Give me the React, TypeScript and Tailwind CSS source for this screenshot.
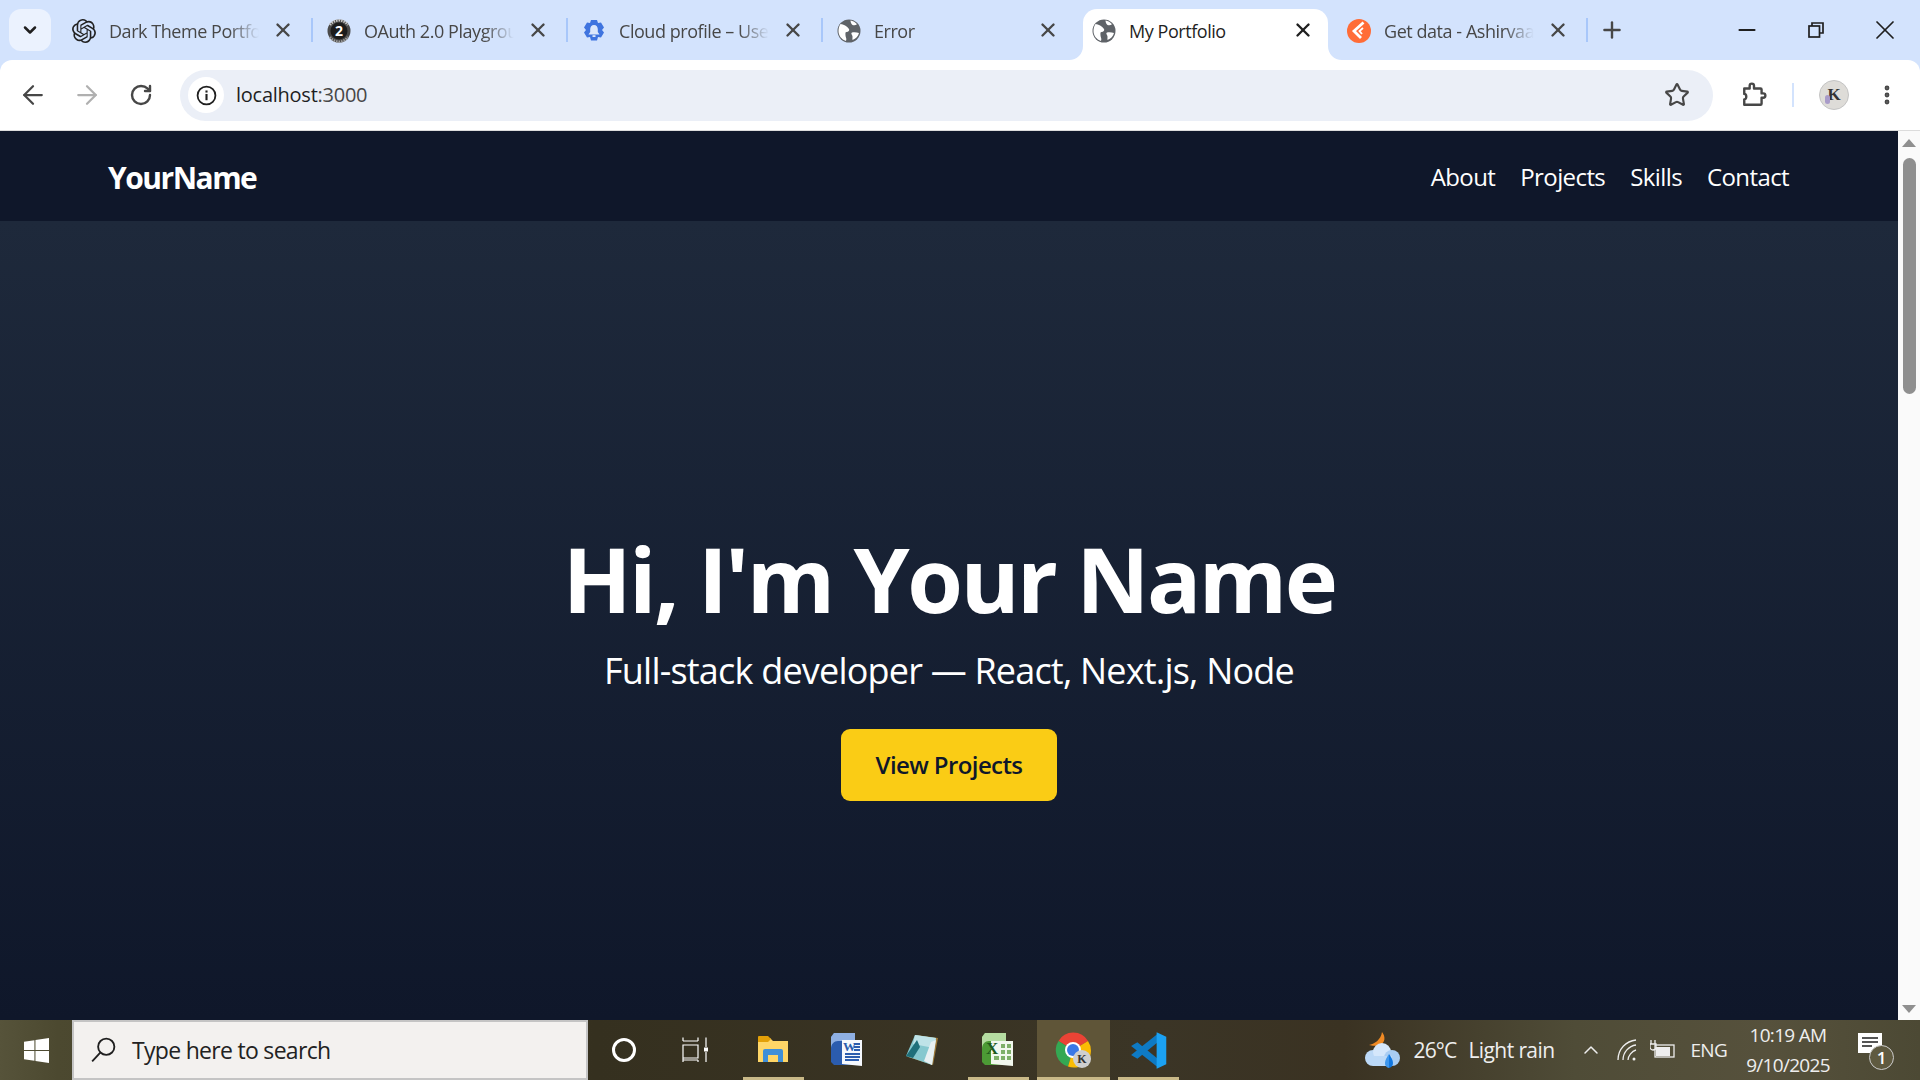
import { X, Plus, ArrowLeft, ArrowRight, RotateCw, Star, Minus, ChevronDown, EllipsisVertical, ChevronUp } from "lucide-react";
import { SiOpenai } from "react-icons/si";

const ui = "font-['Open_Sans','Noto_Sans',sans-serif]";

function Globe() {
  return (
    <svg viewBox="0 0 24 24" className="w-[24px] h-[24px]">
      <circle cx="12" cy="12" r="11.500" fill="#5f6368" />
      <path d="M3.500 5c3 .5 6.500 2 8.500 5 .8 1.500-.5 3-2.500 3-1.500 0-1 2-1 3.500 0 1.500 1.500 3 .5 5.500C4.500 20.500 1.500 16.500 1.500 12c0-2.500.7-5 2-7z" fill="#fff" />
      <path d="M13.500 1.500c2.500.3 5 1.800 6.500 3.800-1.500 1.200-3 1.200-4.500.7-1-.5-2-2.700-2-4.500zM15 13.500c2-.5 5-.3 7 .5-.8 3-3 5.800-6.500 7-.3-2 .5-3.500-.5-5-.7-1-1-2 0-2.500z" fill="#fff" />
    </svg>
  );
}

function OAuthIcon() {
  return (
    <svg viewBox="0 0 24 24" className="w-[24px] h-[24px]">
      <circle cx="12" cy="12" r="11.500" fill="#4a4a4a" />
      <circle cx="12" cy="12" r="8.500" fill="#1c1c1c" />
      <path d="M3 6a11 11 0 0 1 18 0" stroke="#c8c8c8" strokeWidth="2.500" fill="none" strokeDasharray="1.500 1" />
      <path d="M3 18a11 11 0 0 0 18 0" stroke="#a0a0a0" strokeWidth="2.500" fill="none" strokeDasharray="1.500 1" />
      <text x="12" y="17" textAnchor="middle" fontSize="14" fontWeight="700" fill="#fff" fontFamily="Open Sans, sans-serif">2</text>
    </svg>
  );
}

function CloudIcon() {
  return (
    <svg viewBox="0 0 24 24" className="w-[24px] h-[24px]">
      <path d="M9 1h6l1 3 3-.5 3 5-2 2.500 2 2.500-3 5-3-.5-1 3.500H9l-1-3.500-3 .5-3-5 2-2.500-2-2.500 3-5 3 .5z" fill="#3f74df" />
      <path d="M12 6c-2.500 0-3.800 2-3.800 4.300v2.700l-1.700 2.500h11L15.800 13v-2.700C15.800 8 14.500 6 12 6z" fill="#dbe7fb" />
      <rect x="10.500" y="16.200" width="3" height="1.800" fill="#dbe7fb" />
    </svg>
  );
}

function GetDataIcon() {
  return (
    <svg viewBox="0 0 24 24" className="w-[24px] h-[24px]">
      <circle cx="12" cy="12" r="12" fill="#ff6c37" />
      <path d="M16.500 3.500 7 12l7 7" fill="none" stroke="#fff" strokeWidth="2.800" />
      <path d="M16 9l-3.500 3 2.500 3" fill="none" stroke="#fff" strokeWidth="1.800" />
    </svg>
  );
}

const tabs = [
  { title: "Dark Theme Portfolio", icon: <SiOpenai className="w-[24px] h-[24px] text-[#222]" /> },
  { title: "OAuth 2.0 Playground", icon: <OAuthIcon /> },
  { title: "Cloud profile – User", icon: <CloudIcon /> },
  { title: "Error", icon: <Globe /> },
  { title: "My Portfolio", icon: <Globe />, active: true },
  { title: "Get data - Ashirvaad", icon: <GetDataIcon /> },
];

function Tab({ title, icon, active, sep }: { title: string; icon: React.ReactNode; active?: boolean; sep?: boolean }) {
  return (
    <div className="relative w-[255px] h-[60px] shrink-0">
      {active && (
        <>
          <div className="absolute left-[6px] right-[4px] top-[9px] bottom-0 bg-white rounded-t-[14px]" />
          <svg viewBox="0 0 14 14" className="absolute left-[-8px] bottom-0 w-[14px] h-[14px]">
            <path d="M14 0v14H0c8 0 14-6 14-14z" fill="#fff" />
          </svg>
          <svg viewBox="0 0 14 14" className="absolute right-[-10px] bottom-0 w-[14px] h-[14px]">
            <path d="M0 0v14H14C6 14 0 8 0 0z" fill="#fff" />
          </svg>
        </>
      )}
      <div className="relative flex items-center h-[60px] pt-[2px] pl-[15px]">
        <div className="w-[24px] h-[24px] shrink-0">{icon}</div>
        <div
          className={`ml-[13px] w-[150px] whitespace-nowrap overflow-hidden text-[18px] tracking-[-0.45px] ${
            active ? "text-[#1f1f1f]" : "text-[#474747] [mask-image:linear-gradient(90deg,#000_80%,transparent)]"
          }`}
        >
          {title}
        </div>
        <X className={`absolute left-[215px] top-[19px] w-[22px] h-[22px] ${active ? "text-[#1f1f1f]" : "text-[#474747]"}`} strokeWidth={2.600} />
      </div>
      {sep && <div className="absolute right-[-1px] top-[18px] w-[2px] h-[24px] bg-[#a8c7fa]" />}
    </div>
  );
}

function TabStrip() {
  return (
    <div className="flex items-start h-[60px] shrink-0">
      <div className="w-[57px] shrink-0 pl-[9px] pt-[9px]">
        <div className="w-[42px] h-[42px] rounded-[12px] bg-[#ebf2fe] flex items-center justify-center">
          <ChevronDown className="w-[20px] h-[20px] text-[#1f1f1f]" strokeWidth={3} />
        </div>
      </div>
      {tabs.map((t, i) => (
        <Tab key={t.title} title={t.title} icon={t.icon} active={t.active} sep={i < 3 || i === 5} />
      ))}
      <div className="ml-[13px] mt-[18px] w-[24px] h-[24px] flex items-center justify-center">
        <Plus className="w-[26px] h-[26px] shrink-0 text-[#474747]" strokeWidth={2.200} />
      </div>
      <div className="ml-auto flex items-center h-[59px] pr-[1px]">
        <div className="w-[69px] flex justify-center">
          <Minus className="w-[26px] h-[26px] text-[#1f1f1f]" strokeWidth={1.800} />
        </div>
        <div className="w-[69px] flex justify-center">
          <svg viewBox="0 0 16 16" className="w-[16px] h-[16px]" fill="none" stroke="#1f1f1f" strokeWidth="1.700">
            <rect x="1" y="4" width="10.500" height="11" />
            <path d="M4 4V1h11v10h-3.500" />
          </svg>
        </div>
        <div className="w-[69px] flex justify-center">
          <X className="w-[32px] h-[32px] text-[#1f1f1f]" strokeWidth={1.300} />
        </div>
      </div>
    </div>
  );
}

function Toolbar() {
  return (
    <div className="flex items-center h-[71px] bg-white rounded-t-[12px] border-b border-[#dcdcdc] shrink-0">
      <div className="flex items-center w-[180px] shrink-0 pl-[11px]">
        <div className="w-[44px] flex justify-center">
          <ArrowLeft className="w-[30px] h-[30px] text-[#474747]" strokeWidth={1.800} />
        </div>
        <div className="w-[44px] ml-[10px] flex justify-center">
          <ArrowRight className="w-[30px] h-[30px] text-[#b0b0b0]" strokeWidth={1.800} />
        </div>
        <div className="w-[44px] ml-[10px] flex justify-center">
          <RotateCw className="w-[24px] h-[24px] text-[#474747]" strokeWidth={2.400} />
        </div>
      </div>
      <div className="flex items-center flex-1 h-[51px] rounded-full bg-[#ebeff7] pl-[8px] pr-[23px]">
        <div className="w-[36px] h-[36px] rounded-full bg-white flex items-center justify-center">
          <svg viewBox="0 0 20 20" className="w-[21px] h-[21px]" fill="none">
            <circle cx="10" cy="10" r="8.500" stroke="#1f1f1f" strokeWidth="1.700" />
            <rect x="9" y="8.500" width="2" height="6" fill="#1f1f1f" />
            <rect x="9" y="5.200" width="2" height="2" fill="#1f1f1f" />
          </svg>
        </div>
        <div className="ml-[12px] text-[20px] tracking-[-0.25px] text-[#1f1f1f]">
          localhost<span className="text-[#474747]">:3000</span>
        </div>
        <Star className="ml-auto w-[26px] h-[26px] text-[#474747]" strokeWidth={2} />
      </div>
      <div className="flex items-center flex-1 max-w-[207px] shrink-0 pl-[28px]">
        <svg viewBox="0 0 24 24" className="w-[26px] h-[26px]" fill="none" stroke="#474747" strokeWidth="2.200" strokeLinejoin="round">
          <path d="M3 6h5V3.500a2 2 0 0 1 4 0V6h6a1 1 0 0 1 1 1v3.500h1.500a2 2 0 0 1 0 4H19V20a1 1 0 0 1-1 1H3v-5c2.500 0 2.500-5 0-5z" />
        </svg>
        <div className="ml-[25px] w-[2px] h-[24px] bg-[#d3e3fd]" />
        <div className="relative ml-[25px] w-[30px] h-[30px] rounded-full bg-[#dedcd8] border border-[#c4c4c4] flex items-center justify-center font-['Liberation_Serif',serif] font-bold text-[17px] text-[#333]">
          K
          <div className="absolute left-[5px] top-[14px] w-[5px] h-[9px] rounded-full bg-[#a99bc9]" />
        </div>
        <EllipsisVertical className="ml-[26px] w-[24px] h-[24px] text-[#474747]" strokeWidth={2.800} />
      </div>
    </div>
  );
}

function Scrollbar() {
  return (
    <div className="w-[22px] shrink-0 bg-[#fafafa] flex flex-col items-center">
      <div className="mt-[8px] w-0 h-0 border-l-[7px] border-r-[7px] border-b-[8px] border-l-transparent border-r-transparent border-b-[#8f8f8f]" />
      <div className="mt-[11px] w-[13px] h-[236px] rounded-full bg-[#8f8f8f]" />
      <div className="mt-auto mb-[7px] w-0 h-0 border-l-[7px] border-r-[7px] border-t-[8px] border-l-transparent border-r-transparent border-t-[#8f8f8f]" />
    </div>
  );
}

function Page() {
  return (
    <div className="flex flex-1 min-h-0 overflow-hidden">
      <div className="flex-1 flex flex-col min-w-0">
        <header className="h-[90px] shrink-0 bg-[#0f172a] flex items-center justify-between pl-[108px] pr-[108px] pt-[2px]">
          <div className="text-[30px] font-bold text-white tracking-[-1.500px]">YourName</div>
          <nav className="flex gap-[25px] text-[24px] text-white tracking-[-0.6px] -translate-x-px">
            <span>About</span>
            <span>Projects</span>
            <span>Skills</span>
            <span>Contact</span>
          </nav>
        </header>
        <main className="flex-1 bg-gradient-to-b from-[#1e293b] to-[#0f172a] flex flex-col items-center justify-center pt-[93px]">
          <h1 className="text-[90px] leading-[90px] font-bold text-white tracking-[-2.500px]">Hi, I'm Your Name</h1>
          <p className="mt-[28px] text-[36px] leading-[40px] text-white tracking-[-0.800px]">Full-stack developer — React, Next.js, Node</p>
          <button className="mt-[38px] w-[216px] h-[72px] rounded-[9px] bg-[#facc15] text-[#0f172a] text-[24px] font-semibold tracking-[-0.6px]">
            View Projects
          </button>
        </main>
      </div>
      <Scrollbar />
    </div>
  );
}

function Slot({ on, bar, children }: { on?: boolean; bar?: boolean; children: React.ReactNode }) {
  return (
    <div className={`relative h-[60px] flex items-center justify-center ${on ? "w-[73px] mr-[2px] bg-[#5f5538]" : "w-[75px]"}`}>
      {children}
      {bar && <div className={`absolute bottom-0 h-[3px] bg-[#c9b988] ${on ? "left-0 right-0" : "left-[6px] right-[8px]"}`} />}
    </div>
  );
}

function Taskbar() {
  return (
    <div className="h-[60px] shrink-0 flex items-center text-white bg-[linear-gradient(90deg,#56533a_0%,#4c4930_3%,#35301f_31%,#3b3526_60%,#3a3222_70%,#4f4c37_82%,#56513c_92%,#4c4934_100%)]">
      <div className="w-[72px] shrink-0 flex justify-center">
        <svg viewBox="0 0 24 24" className="w-[25px] h-[25px]" fill="#fff">
          <path d="M0 3.500l10-1.400v9.400H0zM11 2l13-2v11.500H11zM0 12.500h10v9.400L0 20.500zM11 12.500h13V24l-13-2z" />
        </svg>
      </div>
      <div className="w-[516px] h-[60px] shrink-0 bg-[#f3f1ef] border-2 border-[#c4c4c4] flex items-center pl-[16px]">
        <svg viewBox="0 0 24 24" className="w-[26px] h-[26px]" fill="none" stroke="#1f1f1f" strokeWidth="1.700">
          <circle cx="15" cy="9" r="7.500" />
          <path d="M9.500 14.500 2 22.500" />
        </svg>
        <span className="ml-[16px] pt-[1px] text-[23px] tracking-[-0.7px] text-[#222]">Type here to search</span>
      </div>
      <div className="w-[72px] shrink-0 flex justify-center">
        <div className="w-[24px] h-[24px] rounded-full border-[3px] border-white" />
      </div>
      <div className="w-[72px] shrink-0 flex justify-center -ml-[1px]">
        <svg viewBox="0 0 26 26" className="w-[26px] h-[26px]" fill="none" stroke="#fff" strokeWidth="1.200">
          <path d="M1 4h15M16 .5V4M1 .5V4M1 8h15v13H1zM1 25v-3.500M1 23h15M16 25v-2M24 .5V10M24 15v10" />
          <rect x="22" y="10.500" width="4" height="4" fill="#fff" stroke="none" />
        </svg>
      </div>
      <div className="flex items-center ml-[6px]">
        <Slot bar>
          <svg viewBox="0 0 32 32" className="w-[32px] h-[32px] mr-[3px]">
            <path d="M1 4h12l3 3h15v21H1z" fill="#ffd667" />
            <path d="M1 3a1 1 0 0 1 1-1h9l3 3-3 3H1z" fill="#e3a008" />
            <path d="M6 28V17a2 2 0 0 1 2-2h16a2 2 0 0 1 2 2v11h-5v-7H11v7z" fill="#3f8fd8" />
          </svg>
        </Slot>
        <Slot>
          <svg viewBox="0 0 36 36" className="w-[36px] h-[36px] mr-[7px]">
            <path d="M3 5 L6 1h21v32H6l-3-3z" fill="#2b5cae" />
            <path d="M3 5L6 1h21v8H10c-4 0-7 3-7 8z" fill="#8fb0e3" />
            <path d="M14 8h20v26l-20-2z" fill="#f5f8fd" />
            <text x="15" y="19" fontSize="13" fontWeight="700" fill="#2b5cae" fontFamily="Liberation Serif, serif">W</text>
            <path d="M26 12h6M26 15h6M26 18h6M17 22h15M17 25h15M17 28h14" stroke="#2b5cae" strokeWidth="1.800" />
          </svg>
        </Slot>
        <Slot>
          <svg viewBox="0 0 34 36" className="w-[34px] h-[36px] mr-[5px]">
            <path d="M11 3 L33 6 L28 33 L3 25z" fill="#a07a3a" />
            <path d="M10 3 L31 6 L27 33 L1 24z" fill="#86c8cf" />
            <path d="M10 3 L31 6 L29 16 L8 12z" fill="#bfe3e8" />
            <path d="M19 29 L27 33 L31 8 L26 10z" fill="#e8f0f2" />
            <path d="M1 24 L12 8 L15 15 L8 26z" fill="#1f6f7a" />
          </svg>
        </Slot>
        <Slot bar>
          <svg viewBox="0 0 36 36" className="w-[36px] h-[36px] mr-[5px]">
            <path d="M3 5 L6 1h21v32H6l-3-3z" fill="#4c9a35" />
            <path d="M3 5L6 1h21v8H10c-4 0-7 3-7 8z" fill="#b5dca1" />
            <path d="M12 9h22v25l-22-2z" fill="#f2f8ee" />
            <path d="M22 12h4v4h-4zM28 12h4v4h-4zM22 18h4v4h-4zM28 18h4v4h-4zM15 24h5v4h-5zM22 24h4v4h-4zM28 24h4v4h-4z" fill="#7fb069" />
            <text x="7" y="22" fontSize="17" fontWeight="700" fill="#1e5a1b" fontFamily="Liberation Serif, serif">X</text>
          </svg>
        </Slot>
        <Slot on bar>
          <svg viewBox="0 0 36 36" className="w-[36px] h-[36px] mr-[2px]">
            <path d="M18 18 L3.500 9A17 17 0 0 1 33 9z" fill="#ea4335" />
            <path d="M18 18 L3.500 9A17 17 0 0 0 13 34.500z" fill="#34a853" />
            <path d="M18 18 L33 9A17 17 0 0 1 13 34.500z" fill="#fbbc04" />
            <circle cx="18" cy="18" r="8" fill="#fff" />
            <circle cx="18" cy="18" r="6" fill="#3b78e7" />
            <circle cx="27" cy="27" r="9" fill="#cfcfcf" />
            <text x="27" y="31" textAnchor="middle" fontSize="12" fontWeight="700" fill="#333" fontFamily="Liberation Serif, serif">K</text>
          </svg>
        </Slot>
        <Slot bar>
          <svg viewBox="0 0 100 100" className="w-[37px] h-[37px] mr-[2px]">
            <path d="M75 5 V28 L20 72 L3 62 Z" fill="#0e7ac4" />
            <path d="M3 38 L20 28 L75 72 V95 Z" fill="#0e7ac4" />
            <path d="M72 1 L98 13 V87 L72 99 Z" fill="#1ba1f2" />
          </svg>
        </Slot>
      </div>
      <div className="ml-auto flex items-center h-full">
        <svg viewBox="0 0 38 38" className="w-[38px] h-[38px]">
          <path d="M19 1c4 5 3 11-2 13-3 1-8 1-11 0 5-1 12-5 13-13z" fill="#f08a24" />
          <circle cx="10" cy="27" r="8" fill="#bcd9f7" />
          <circle cx="19" cy="21" r="9" fill="#d5e7fb" />
          <circle cx="29" cy="27" r="8" fill="#a9cdf3" />
          <rect x="10" y="25" width="19" height="10" fill="#bcd9f7" />
          <path d="M26 23v14a5 5 0 0 0 4-5c0-3-2-6-4-9z" fill="#1177e0" />
          <path d="M26 23c-2 3-4 6-4 9a4.500 4.500 0 0 0 4 5z" fill="#3f97ec" />
        </svg>
        <span className="ml-[12px] pt-[1px] text-[21px] tracking-[-0.8px] text-[#eee]">26°C</span>
        <span className="ml-[12px] pt-[1px] text-[21px] tracking-[-0.6px] text-[#eee]">Light rain</span>
        <ChevronUp className="ml-[25px] w-[24px] h-[24px] text-[#eee]" strokeWidth={1.500} />
        <svg viewBox="0 0 24 24" className="ml-[13px] w-[24px] h-[24px]" fill="none" stroke="#eee" strokeWidth="1.300">
          <path d="M2 22C2 11 10 3 20 2M7 22C7 14 13 8 20 7M12 22c0-4 4-9 8-10" />
          <circle cx="18" cy="21" r="1.500" fill="#eee" stroke="none" />
        </svg>
        <svg viewBox="0 0 26 22" className="ml-[10px] w-[26px] h-[22px]" fill="none" stroke="#eee" strokeWidth="1.300">
          <rect x="5" y="6" width="19" height="12" />
          <rect x="6" y="8" width="14" height="9" fill="#eee" stroke="none" />
          <path d="M1 1v4M5 1v4M0 5h6v3a3 3 0 0 1-6 0z" />
        </svg>
        <span className="ml-[14px] text-[19px] tracking-[-0.7px] text-[#eee]">ENG</span>
        <div className="ml-[17px] w-[88px] flex flex-col items-center text-[19px] leading-[30px] tracking-[-0.7px] text-[#eee] whitespace-nowrap">
          <span>10:19 AM</span>
          <span>9/10/2025</span>
        </div>
        <div className="relative ml-[26px] mr-[36px] w-[26px] h-[28px] -mt-[6px]">
          <div className="w-[24px] h-[20px] bg-white flex flex-col gap-[2px] pt-[4px] px-[4px]">
            <div className="h-[2px] bg-[#555]" />
            <div className="h-[2px] bg-[#555]" />
            <div className="h-[2px] w-[10px] bg-[#555]" />
          </div>
          <div className="absolute left-[11px] top-[12px] w-[25px] h-[25px] rounded-full bg-[#5f5a40] border border-[#ccc] flex items-center justify-center text-[17px] font-semibold text-white">
            1
          </div>
        </div>
      </div>
    </div>
  );
}

export default function App() {
  return (
    <div className={`h-screen w-full flex flex-col overflow-hidden bg-[#d3e3fd] ${ui}`}>
      <TabStrip />
      <Toolbar />
      <Page />
      <Taskbar />
    </div>
  );
}
